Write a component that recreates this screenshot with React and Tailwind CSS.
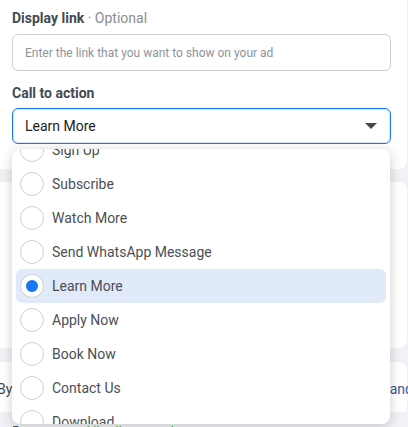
import React from "react";

const options = [
  "Sign Up",
  "Subscribe",
  "Watch More",
  "Send WhatsApp Message",
  "Learn More",
  "Apply Now",
  "Book Now",
  "Contact Us",
  "Download",
];

export default function App() {
  return (
    <div
      className="relative w-[408px] h-[427px] overflow-hidden bg-[#f0f2f5]"
      style={{ fontFamily: "Roboto, 'Liberation Sans', Arial, sans-serif" }}
    >
      {/* Card 1 */}
      <div className="w-[407px] h-[169px] bg-white rounded-br-lg px-3 pt-[9px]">
        <div className="text-[14px] leading-[18px] font-bold text-[#444950]">
          Display link <span className="font-normal text-[#8a8d91]">· Optional</span>
        </div>
        <div className="mt-[7px] w-[379px] h-[37px] border border-[#ccd0d5] rounded-md flex items-center px-3">
          <span className="text-[12px] text-[#8d949e]">Enter the link that you want to show on your ad</span>
        </div>
        <div className="mt-[13px] text-[14px] leading-[18px] font-bold text-[#444950]">Call to action</div>
        <div className="mt-[6px] w-[379px] h-[36px] border border-[#1877f2] rounded-md shadow-[inset_0_0_0_1px_#dbe7fb] flex items-center justify-between pl-3 pr-[13px]">
          <span className="text-[14px] text-[#1c1e21]">Learn More</span>
          <svg width="12" height="6" viewBox="0 0 12 6">
            <path d="M0 0 L12 0 L6 6 Z" fill="#444950" />
          </svg>
        </div>
      </div>

      {/* Card 2 */}
      <div className="mt-[13px] w-[407px] h-[166px] bg-white rounded-r-lg" />

      {/* Card 3 */}
      <div className="mt-[14px] w-[407px] h-[50px] bg-white rounded-tr-lg flex items-center justify-between text-[14px] pt-[4px]">
        <span className="ml-[-3px] text-[#444950]">By clicking</span>
        <span className="text-[#385898] mr-[-6px]">and</span>
      </div>

      {/* Footer */}
      <div className="h-[20px] bg-[#f0f2f5] flex items-start gap-[24px] pl-3 pt-[10px] text-[14px]">
        <span className="text-[#444950]">Done</span>
        <span className="text-[#42b72a]">✓ All edits saved</span>
      </div>

      {/* Dropdown overlay */}
      <div className="absolute left-[12px] top-[149px] w-[378px] h-[275px] bg-white rounded-lg shadow-[0_2px_12px_rgba(0,0,0,0.2)] overflow-hidden">
        <div className="mt-[-16px] px-1">
          {options.map((o) => {
            const sel = o === "Learn More";
            return (
              <div
                key={o}
                className={`h-[34px] flex items-center rounded-md pl-[4px] ${sel ? "bg-[#e1eaf8]" : ""}`}
              >
                <div className="w-[24px] h-[24px] rounded-full border border-[#ccd0d5] bg-white flex items-center justify-center">
                  {sel && <div className="w-[12px] h-[12px] rounded-full bg-[#1877f2]" />}
                </div>
                <span className="ml-[8px] text-[14px] text-[#4b4f56]">{o}</span>
              </div>
            );
          })}
        </div>
      </div>
    </div>
  );
}
